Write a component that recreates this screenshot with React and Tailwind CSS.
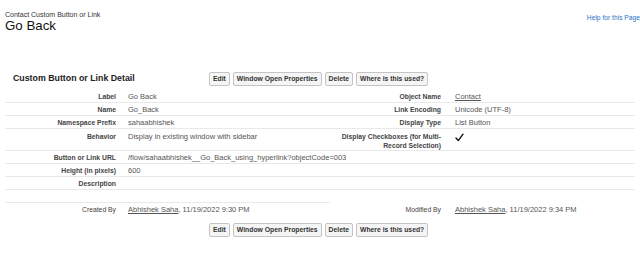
import React from 'react'

const Btn = ({ children }) => (
  <button className="h-[14px] px-[3px] border border-[#c4c4c4] rounded-[2px] bg-[#f5f5f5] text-[6.8px] leading-[12px] font-bold text-[#333]">
    {children}
  </button>
)

const Buttons = () => (
  <div className="flex gap-[3px]">
    <Btn>Edit</Btn>
    <Btn>Window Open Properties</Btn>
    <Btn>Delete</Btn>
    <Btn>Where is this used?</Btn>
  </div>
)

const Label = ({ children, className = '' }) => (
  <div className={`w-[117px] shrink-0 pr-[6px] text-right text-[6.8px] leading-[9px] font-bold text-[#444] ${className}`}>
    {children}
  </div>
)

const Value = ({ children, className = '' }) => (
  <div className={`pl-[6px] text-[7.5px] leading-[9px] text-[#555] ${className}`}>{children}</div>
)

const Check = () => (
  <svg width="9" height="9" viewBox="0 0 9 9" className="mt-[1px]">
    <path d="M1 5 L3.3 7.6 L8 1.2" fill="none" stroke="#111" strokeWidth="1.4" strokeLinecap="round" strokeLinejoin="round" />
  </svg>
)

const rows = [
  { l: 'Label', v: 'Go Back', rl: 'Object Name', rv: <span className="underline">Contact</span> },
  { l: 'Name', v: 'Go_Back', rl: 'Link Encoding', rv: 'Unicode (UTF-8)' },
  { l: 'Namespace Prefix', v: 'sahaabhishek', rl: 'Display Type', rv: 'List Button' },
]

export default function App() {
  return (
    <div className="w-[640px] h-[253px] overflow-hidden bg-white px-[5px] font-['Liberation_Sans',Arial,sans-serif]">
      {/* page header */}
      <div className="flex justify-between pt-[10px]">
        <div>
          <div className="text-[7px] leading-[9px] text-[#333]">Contact Custom Button or Link</div>
          <div className="text-[13.3px] leading-[13px] text-[#111]">Go Back</div>
        </div>
        <a className="mt-[3px] -mr-[5px] text-[6.7px] leading-[9px] text-[#2a73c5]">Help for this Page</a>
      </div>

      {/* section header */}
      <div className="mt-[40px] flex items-center h-[14px]">
        <div className="w-[204px] pl-[8px] text-[8.8px] font-bold text-[#222]">Custom Button or Link Detail</div>
        <Buttons />
      </div>

      {/* detail rows */}
      <div className="mt-[4px]">
        {rows.map((r) => (
          <div key={r.l} className="flex h-[13px] pt-[2px] border-b border-[#e9e9e9]">
            <Label>{r.l}</Label>
            <Value className="w-[208px]">{r.v}</Value>
            <Label>{r.rl}</Label>
            <Value className="pl-[8px]">{r.rv}</Value>
          </div>
        ))}
        <div className="flex h-[22px] pt-[3px] border-b border-[#e9e9e9]">
          <Label>Behavior</Label>
          <Value className="w-[208px]">Display in existing window with sidebar</Value>
          <Label className="leading-[8px]">
            Display Checkboxes (for Multi-
            <br />
            Record Selection)
          </Label>
          <Value className="pl-[8px]">
            <Check />
          </Value>
        </div>
        <div className="flex h-[13px] pt-[2px] border-b border-[#e9e9e9]">
          <Label>Button or Link URL</Label>
          <Value>/flow/sahaabhishek__Go_Back_using_hyperlink?objectCode=003</Value>
        </div>
        <div className="flex h-[13px] pt-[2px] border-b border-[#e9e9e9]">
          <Label>Height (in pixels)</Label>
          <Value>600</Value>
        </div>
        <div className="flex h-[13px] pt-[2px] border-b border-[#e9e9e9]">
          <Label>Description</Label>
          <Value></Value>
        </div>
        <div className="h-[13px] w-[325px] border-b border-[#e9e9e9]" />
        <div className="flex h-[13px] pt-[2px]">
          <Label className="font-normal text-[#333]">Created By</Label>
          <Value className="w-[208px]">
            <span className="underline">Abhishek Saha</span>, 11/19/2022 9:30 PM
          </Value>
          <Label className="font-normal text-[#333]">Modified By</Label>
          <Value className="pl-[8px]">
            <span className="underline">Abhishek Saha</span>, 11/19/2022 9:34 PM
          </Value>
        </div>
      </div>

      {/* bottom buttons */}
      <div className="mt-[7px] pl-[204px]">
        <Buttons />
      </div>
    </div>
  )
}
